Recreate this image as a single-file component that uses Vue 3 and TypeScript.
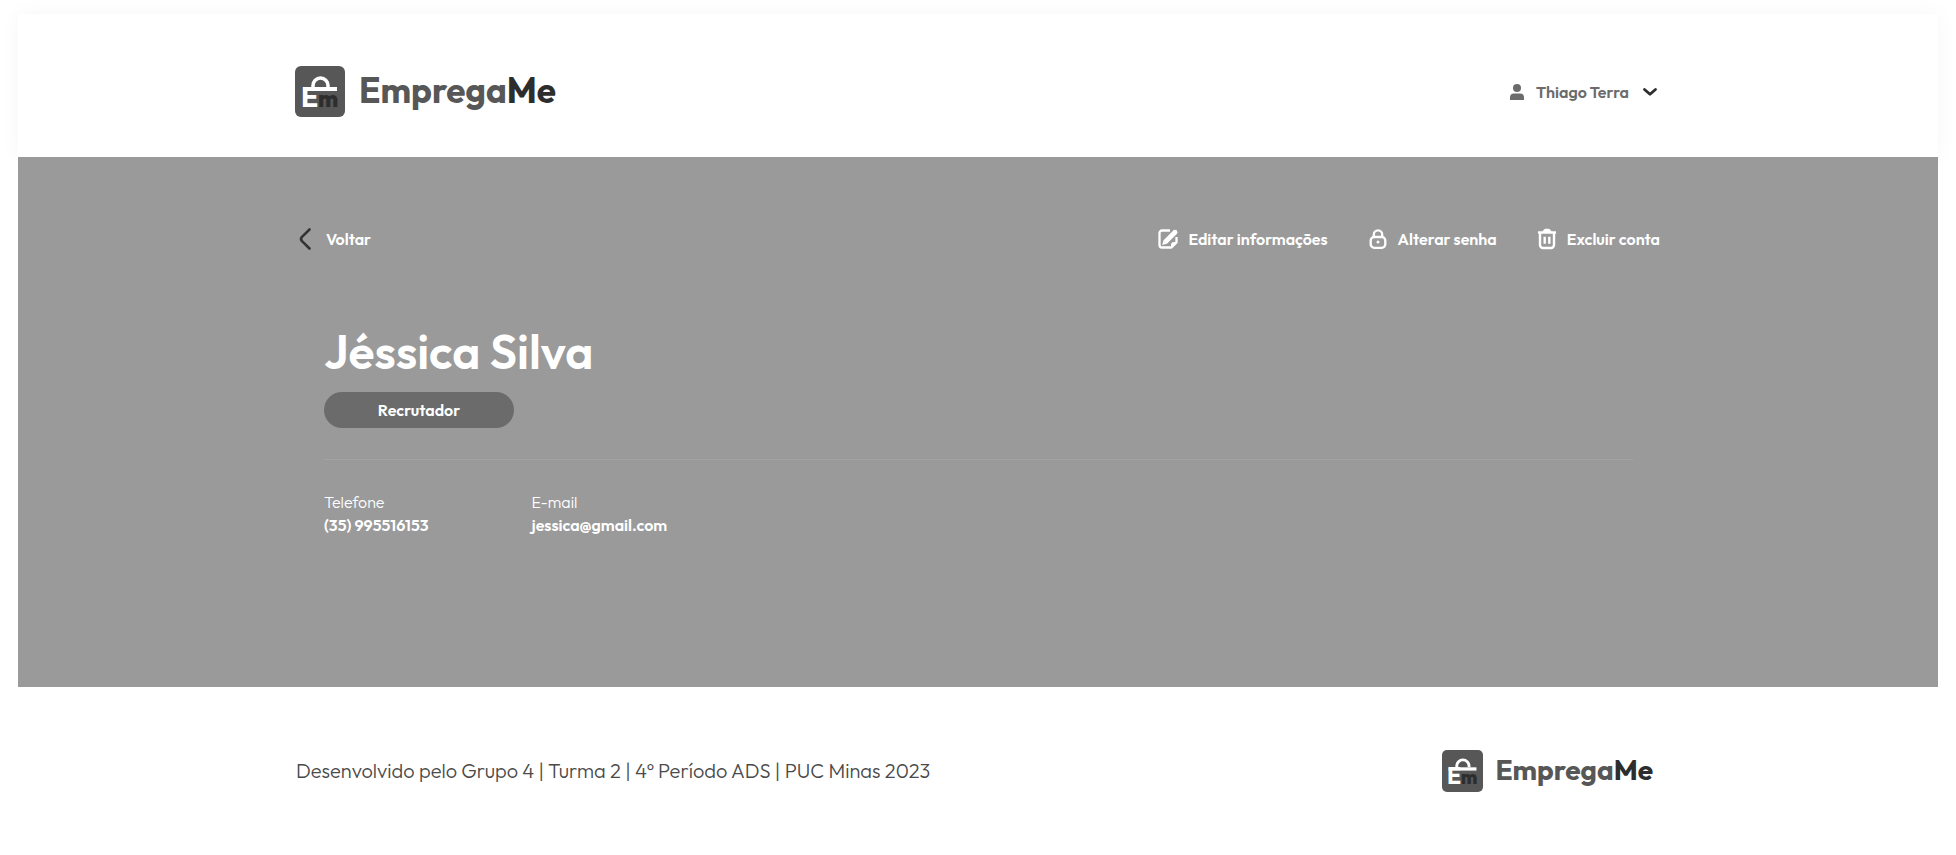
<script setup lang="ts">
import { ref } from 'vue'

interface Contact {
  label: string
  value: string
}

const userName = ref('Thiago Terra')
const profileName = ref('Jéssica Silva')
const role = ref('Recrutador')
const contacts = ref<Contact[]>([
  { label: 'Telefone', value: '(35) 995516153' },
  { label: 'E-mail', value: 'jessica@gmail.com' },
])
</script>

<template>
  <div class="page">
    <header class="header">
      <div class="container header-row">
        <a class="logo" href="#">
          <svg class="logo-mark" viewBox="0 0 50 51" aria-hidden="true">
            <rect width="50" height="51" rx="6" fill="#575757" />
            <path d="M18 21v-1.500a7.500 7.500 0 0 1 15 0V21" fill="none" stroke="#fff" stroke-width="3.500" />
            <rect x="8" y="21" width="34" height="4" fill="#fff" />
            <text class="mark-e" x="6" y="41">E</text>
            <text class="mark-m" x="23" y="41">m</text>
          </svg>
          <span class="logo-text">Emprega<b>Me</b></span>
        </a>
        <button class="user" type="button">
          <svg class="user-icon" viewBox="0 0 14 16" aria-hidden="true">
            <circle cx="7" cy="4" r="4" fill="#6b6b6b" />
            <path d="M0 16v-2.500A4 4 0 0 1 4 9.500h6a4 4 0 0 1 4 4V16z" fill="#6b6b6b" />
          </svg>
          <span>{{ userName }}</span>
          <svg class="caret" viewBox="0 0 14 8" aria-hidden="true">
            <path d="M1.500 1.500 7 6.300l5.500-4.800" fill="none" stroke="#2d2d2d" stroke-width="2.800" stroke-linecap="round" stroke-linejoin="round" />
          </svg>
        </button>
      </div>
    </header>

    <main class="main">
      <div class="container">
        <div class="toolbar">
          <a class="back" href="#">
            <svg class="back-icon" viewBox="0 0 12 22" aria-hidden="true">
              <path d="M10.500 1.500 3 8.800Q1 11 3 13.200l7.500 7.300" fill="none" stroke="#333" stroke-width="2.600" stroke-linecap="round" />
            </svg>
            <span>Voltar</span>
          </a>
          <div class="actions">
            <button class="action" type="button">
              <svg class="action-icon" viewBox="0 0 20 20" aria-hidden="true">
                <path d="M12 1.500H4A2.500 2.500 0 0 0 1.500 4v12A2.500 2.500 0 0 0 4 18.500h9.500l5-5V8" fill="none" stroke="#fff" stroke-width="2.300" stroke-linejoin="round" />
                <path d="M13.500 18.500v-3a2 2 0 0 1 2-2h3z" fill="#fff" stroke="#fff" stroke-linejoin="round" />
                <path d="m7 13.200 10-9.900" stroke="#fff" stroke-width="4.800" />
                <path d="m4.200 15.900 1.200-4.300 3.200 3.200z" fill="#fff" />
                <circle cx="17" cy="3.200" r="2.400" fill="#fff" />
              </svg>
              <span>Editar informações</span>
            </button>
            <button class="action" type="button">
              <svg class="action-icon" viewBox="0 0 20 20" aria-hidden="true">
                <path d="M5.800 8V5.500a4.200 4.200 0 0 1 8.400 0V8" fill="none" stroke="#fff" stroke-width="2.300" />
                <rect x="2.700" y="8" width="14.600" height="10.800" rx="3.500" fill="none" stroke="#fff" stroke-width="2.300" />
                <circle cx="10" cy="13" r="1.500" fill="#fff" />
              </svg>
              <span>Alterar senha</span>
            </button>
            <button class="action" type="button">
              <svg class="action-icon" viewBox="0 0 20 20" aria-hidden="true">
                <path d="M1 3.500h18M3 4v12a3 3 0 0 0 3 3h8a3 3 0 0 0 3-3V4" fill="none" stroke="#fff" stroke-width="2.400" />
                <path d="M4.500 3.500 7 .5Q7.600-.3 8.600-.3h2.800q1 0 1.600.8l2.500 3z" fill="#fff" />
                <path d="M7.700 7.700v7M12.300 7.700v7" stroke="#fff" stroke-width="2.400" />
              </svg>
              <span>Excluir conta</span>
            </button>
          </div>
        </div>

        <section class="profile">
          <h1 class="name">{{ profileName }}</h1>
          <div class="role">{{ role }}</div>
          <hr class="divider" />
          <dl class="contacts">
            <div v-for="contact in contacts" :key="contact.label" class="contact">
              <dt>{{ contact.label }}</dt>
              <dd>{{ contact.value }}</dd>
            </div>
          </dl>
        </section>
      </div>
    </main>

    <footer class="footer">
      <div class="container footer-row">
        <p class="credits">Desenvolvido pelo Grupo 4 | Turma 2 | 4º Período ADS | PUC Minas 2023</p>
        <a class="logo logo-small" href="#">
          <svg class="logo-mark" viewBox="0 0 50 51" aria-hidden="true">
            <rect width="50" height="51" rx="6" fill="#575757" />
            <path d="M18 21v-1.500a7.500 7.500 0 0 1 15 0V21" fill="none" stroke="#fff" stroke-width="3.500" />
            <rect x="8" y="21" width="34" height="4" fill="#fff" />
            <text class="mark-e" x="6" y="41">E</text>
            <text class="mark-m" x="23" y="41">m</text>
          </svg>
          <span class="logo-text">Emprega<b>Me</b></span>
        </a>
      </div>
    </footer>
  </div>
</template>

<style>
body {
  margin: 0;
  background: #fff;
}
</style>

<style scoped>
.page {
  padding: 14px 18px 0;
  font-family: Outfit, Lato, "Liberation Sans", sans-serif;
  font-size: 16px;
  line-height: 24px;
  color: #fff;
}
.container {
  box-sizing: border-box;
  width: 100%;
  max-width: 1366px;
  margin: 0 auto;
}
a {
  color: inherit;
  text-decoration: none;
}
button {
  padding: 0;
  border: 0;
  background: none;
  font: inherit;
  color: inherit;
  cursor: pointer;
}
svg {
  display: block;
  flex: none;
  overflow: visible;
}
.header {
  padding: 52px 0 40px;
  background: #fff;
  box-shadow: 0 0 20px rgba(0, 0, 0, 0.04);
}
.header-row,
.footer-row,
.toolbar {
  display: flex;
  align-items: center;
  justify-content: space-between;
}
.logo {
  display: flex;
  align-items: flex-start;
  gap: 14px;
}
.logo-mark {
  width: 50px;
  height: 51px;
}
.mark-e {
  font-size: 28px;
  font-weight: 700;
  fill: #fff;
}
.mark-m {
  font-size: 23px;
  font-weight: 800;
  fill: #2d2d2d;
}
.logo-text {
  font-size: 35px;
  line-height: 48px;
  font-weight: 700;
  color: #575757;
}
.logo-text b {
  font-weight: 700;
  color: #2d2d2d;
}
.user {
  display: flex;
  align-items: center;
  gap: 12px;
  padding-right: 4px;
  font-weight: 600;
  color: #6b6b6b;
}
.user-icon {
  width: 14px;
  height: 16px;
}
.caret {
  width: 14px;
  height: 8px;
  margin-left: 2px;
}
.main {
  box-sizing: border-box;
  min-height: 530px;
  padding: 70px 0 144px;
  background: #9a9a9a;
}
.toolbar {
  padding: 0 1px 0 4px;
}
.back {
  display: flex;
  align-items: center;
  gap: 15px;
  font-weight: 600;
}
.back-icon {
  width: 12px;
  height: 22px;
}
.actions {
  display: flex;
  gap: 40px;
}
.action {
  display: flex;
  align-items: center;
  gap: 10px;
  font-weight: 600;
}
.action-icon {
  width: 20px;
  height: 20px;
}
.profile {
  padding: 70px 28px 0 29px;
}
.name {
  margin: 0;
  font-size: 48px;
  line-height: 60px;
  font-weight: 600;
}
.role {
  width: 190px;
  margin-top: 11px;
  border-radius: 18px;
  background: #6b6b6b;
  line-height: 36px;
  font-weight: 600;
  text-align: center;
}
.divider {
  height: 1px;
  margin: 31px 0 0;
  border: 0;
  background: #a3a3a3;
}
.contacts {
  display: grid;
  grid-template-columns: repeat(2, max-content);
  column-gap: 103px;
  margin: 31px 0 0;
}
.contact {
  line-height: 23px;
}
.contact dt {
  font-weight: 300;
}
.contact dd {
  margin: 0;
  font-weight: 600;
}
.footer {
  padding: 63px 0;
}
.credits {
  margin: 0;
  padding-left: 1px;
  font-size: 20px;
  font-weight: 300;
  color: #4a4a4a;
}
.logo-small {
  gap: 12px;
  padding-right: 8px;
}
.logo-small .logo-mark {
  width: 41px;
  height: 42px;
}
.logo-small .logo-text {
  font-size: 28px;
  line-height: 40px;
}
</style>
